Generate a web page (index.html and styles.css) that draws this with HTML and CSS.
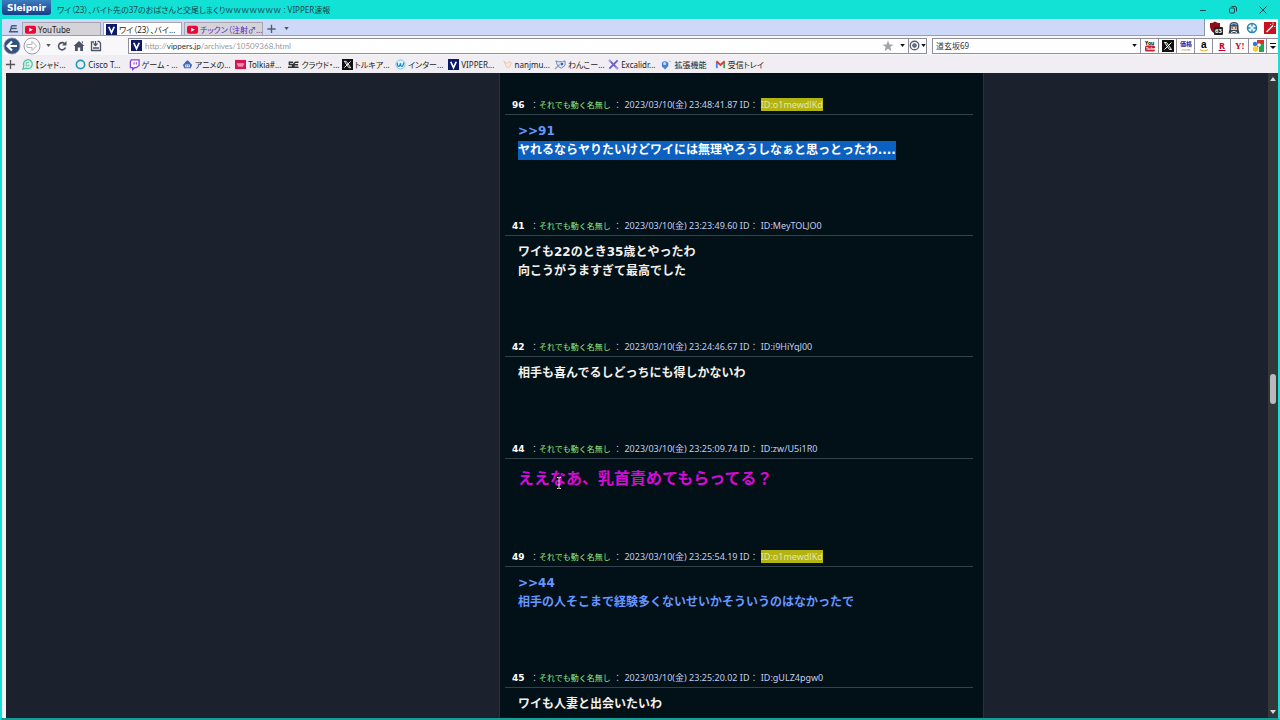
FILE: index.html
```html
<!DOCTYPE html>
<html lang="ja">
<head>
  <meta charset="UTF-8">
  <meta name="viewport" content="width=device-width, initial-scale=1.0">
  <title>VIPPER速報</title>
  <link rel="stylesheet" href="styles.css">
</head>
<body>

  <!-- Title bar -->
  <header class="titlebar">
    <button class="app-menu">Sleipnir</button>
    <span class="window-title">ワイ（23）、バイト先の37のおばさんと交尾しまくりｗｗｗｗｗｗｗ : VIPPER速報</span>
    <div class="window-controls">
      <button aria-label="最小化"><svg viewBox="0 0 10 10"><path d="M2 5.5h6"/></svg></button>
      <button aria-label="元に戻す"><svg viewBox="0 0 10 10"><rect x="1.5" y="3" width="5" height="5" rx="1"/><path d="M3.5 1.5h3.5q1.5 0 1.5 1.5v3.5"/></svg></button>
      <button aria-label="閉じる"><svg viewBox="0 0 10 10"><path d="M1.5 1.5l7 7M8.5 1.5l-7 7"/></svg></button>
    </div>
  </header>

  <!-- Tabs -->
  <div class="tabbar">
    <nav class="tabs">
      <button class="tab-tool" aria-label="タブ一覧"><svg class="icon" viewBox="0 0 12 12"><path d="M4 3h5.500M3 6h6.500M1 9.500h10M4 3L2.500 9" fill="none" stroke="#4c5870" stroke-width="1.500"/></svg></button>
      <a class="tab" href="#"><svg class="icon" viewBox="0 0 12 12"><rect y="2" width="12" height="8.500" rx="2" fill="#e8063a"/><path d="M4.500 4v4.500L8.500 6.200z" fill="#fff"/></svg>YouTube</a>
      <a class="tab active" href="#"><svg class="icon" viewBox="0 0 12 12"><rect width="12" height="12" fill="#0b1a66"/><path d="M3 3l3 6.500L9 3" fill="none" stroke="#fff" stroke-width="1.800"/></svg>ワイ（23）、バイ...</a>
      <a class="tab unread" href="#"><svg class="icon" viewBox="0 0 12 12"><rect y="2" width="12" height="8.500" rx="2" fill="#e8063a"/><path d="M4.500 4v4.500L8.500 6.200z" fill="#fff"/></svg>チックン（注射♂...</a>
      <button class="tab-tool" aria-label="新しいタブ"><svg class="icon" viewBox="0 0 12 12"><path d="M6 2v9M1.500 6.500h9" stroke="#555c6b" stroke-width="1.500"/></svg></button>
      <button class="tab-tool" aria-label="タブメニュー"><svg class="caret" viewBox="0 0 6 4"><path d="M0 0h6L3 4z"/></svg></button>
    </nav>
    <div class="extensions">
      <button aria-label="広告ブロック"><svg viewBox="0 0 14 14"><path d="M1 2q3 0 5-1.500Q8 2 11 2v4q-1 5-5 6.500Q2 11 1 6z" fill="#8d0c16"/><rect x="5" y="6" width="9" height="8" rx="1" fill="#222"/><text x="6" y="12" class="badge">63</text></svg></button>
      <button aria-label="マスク"><svg viewBox="0 0 14 14"><path d="M2.500 5q0-4 4.500-4t4.500 4v3l1 4.500h-11l1-4.500z" fill="#384454"/><path d="M4 4q3-3 6 0" stroke="#5fb2e0" stroke-width="1.500" fill="none"/><path d="M4 5.500h6V9H4z" fill="#f1c3ae"/><path d="M4.500 7h1.500M8 7h1.500" stroke="#333"/><path d="M4 11.500q3-2.500 6 0" stroke="#fff" fill="none"/></svg></button>
      <button aria-label="ターゲット"><svg viewBox="0 0 14 14"><circle cx="7" cy="7" r="4.500" fill="#eaf6fc" stroke="#2685b5" stroke-width="1.500"/><path d="M7 2v3.500M7 8.500V12M2 7h3.500M8.500 7H12" stroke="#2685b5" stroke-width="1.300"/></svg></button>
      <button aria-label="ワンド"><svg viewBox="0 0 14 14"><rect x="1" y="1" width="12" height="12" fill="#c9101c"/><path d="M3.500 11L10 4.500" stroke="#fff" stroke-width="1.500"/><path d="M10 1.500v2M11 5.500h1.500M7 3l1 1" stroke="#fbb" /></svg></button>
    </div>
  </div>

  <!-- Toolbar -->
  <div class="toolbar">
    <div class="nav-buttons">
      <button aria-label="戻る"><svg class="nav-icon big" viewBox="0 0 18 18"><circle cx="9" cy="9" r="8" fill="#34517f" stroke="#8697b5"/><path d="M14 9H5M9 4.500L4.500 9L9 13.500" fill="none" stroke="#fff" stroke-width="2.200"/></svg></button>
      <button aria-label="進む"><svg class="nav-icon big" viewBox="0 0 18 18"><circle cx="9" cy="9" r="8" fill="#fafafa" stroke="#9a9aa2"/><path d="M4 7.500h5V4.500L13.500 9L9 13.500v-3H4z" fill="#fff" stroke="#b5b5ba"/></svg></button>
      <button aria-label="履歴"><svg class="caret" viewBox="0 0 6 4"><path d="M0 0h6L3 4z"/></svg></button>
      <button aria-label="更新"><svg class="nav-icon" viewBox="0 0 12 12"><path d="M9.500 7.500A3.600 3.600 0 1 1 8.500 3.500" fill="none" stroke="#4c5464" stroke-width="1.600"/><path d="M10.500 1v4.500H6z" fill="#4c5464"/></svg></button>
      <button aria-label="ホーム"><svg class="nav-icon" viewBox="0 0 12 12"><path d="M6 1L11.500 6H10v5H7.200V7.500H4.800V11H2V6H.5z" fill="#4c5464"/><path d="M8.500 1.500h1.500v2.500z" fill="#4c5464"/></svg></button>
      <button aria-label="保存"><svg class="nav-icon" viewBox="0 0 12 12"><path d="M4 2H1.500v8.500h9V3L9 1.500H7.500" fill="none" stroke="#4c5464" stroke-width="1.300"/><path d="M5.500 1v4M3.500 3.500l2 2l2-2M3 8h6" fill="none" stroke="#4c5464" stroke-width="1.300"/></svg></button>
    </div>
    <div class="address">
      <svg class="icon" viewBox="0 0 12 12"><rect width="12" height="12" fill="#0b1a66"/><path d="M3 3l3 6.500L9 3" fill="none" stroke="#fff" stroke-width="1.800"/></svg>
      <a class="url" href="#">http://<b>vippers.jp</b>/archives/10509368.html</a>
      <button aria-label="お気に入り"><svg class="nav-icon" viewBox="0 0 12 12"><path d="M6 .5l1.500 4h4L8.300 7l1.200 4.200L6 8.700l-3.500 2.500L3.700 7L.5 4.500h4z" fill="#a4a4a8"/></svg></button>
      <button aria-label="アドレス履歴"><svg class="caret dark" viewBox="0 0 6 4"><path d="M0 0h6L3 4z"/></svg></button>
      <button class="engine" aria-label="表示エンジン"><svg class="icon" viewBox="0 0 12 12"><circle cx="6" cy="6" r="4.700" fill="none" stroke="#596170" stroke-width="1.500"/><circle cx="6" cy="6" r="2" fill="#697a95" stroke="#39465f"/></svg><svg class="caret dark" viewBox="0 0 6 4"><path d="M0 0h6L3 4z"/></svg></button>
    </div>
    <div class="search">
      <input type="text" value="道玄坂69" aria-label="検索">
      <button aria-label="検索履歴"><svg class="caret dark" viewBox="0 0 6 4"><path d="M0 0h6L3 4z"/></svg></button>
      <div class="engines">
        <button aria-label="YouTube"><svg viewBox="0 0 12 12"><text x="1" y="5" class="logo-you">You</text><rect x="1" y="5.500" width="10" height="6" rx="1.500" fill="#c8202f"/><text x="2" y="10" class="logo-tube">Tube</text></svg></button>
        <button aria-label="X"><svg viewBox="0 0 12 12"><rect width="12" height="12" fill="#111"/><path d="M2.500 2.500h2l5 7h-2zM9.500 2.500l-7 7" fill="none" stroke="#fff"/></svg></button>
        <button aria-label="価格.com"><svg viewBox="0 0 12 12"><text x="0" y="6" class="logo-kakaku">価格</text><text x="1" y="11" class="logo-com">.com</text></svg></button>
        <button aria-label="Amazon"><svg viewBox="0 0 12 12"><text x="3" y="8" class="logo-a">a</text><path d="M2 9.500q4 3 8 0" fill="none" stroke="#f2b33a" stroke-width="1.200"/></svg></button>
        <button aria-label="楽天"><svg viewBox="0 0 12 12"><text x="3" y="9" class="logo-r">R</text><path d="M2.500 10.500h7" stroke="#bf0020"/></svg></button>
        <button aria-label="Yahoo"><svg viewBox="0 0 12 12"><text x="1" y="9" class="logo-y">Y!</text></svg></button>
        <button aria-label="Google"><svg viewBox="0 0 12 12"><rect x="5" width="7" height="7" fill="#d9342b"/><rect x="7" y="4" width="5" height="8" fill="#23a455"/><circle cx="3" cy="4" r="2.200" fill="#3276d6"/><circle cx="3.500" cy="9" r="2.700" fill="#f2ce2f"/><circle cx="7" cy="5" r="1.800" fill="#fff"/></svg></button>
        <button aria-label="その他"><svg viewBox="0 0 12 12"><path d="M3 3.500h6" stroke="#111"/><path d="M3 6h6L6 9z" fill="#111"/></svg></button>
      </div>
    </div>
  </div>

  <!-- Bookmarks -->
  <nav class="bookmarks">
    <button aria-label="追加"><svg class="icon" viewBox="0 0 12 12"><path d="M6 1v10M1 6h10" stroke="#555" stroke-width="1.500"/></svg></button>
    <div class="bookmark-list">
      <a href="#"><svg class="icon" viewBox="0 0 12 12"><path d="M1 11l1-3.500A4.800 4.800 0 1 1 4.500 10z" fill="none" stroke="#41c99b" stroke-width="1.400"/><path d="M7.500 4h-3v3.500h3V6" fill="none" stroke="#41c99b"/></svg>【シャド...</a>
      <a href="#"><svg class="icon" viewBox="0 0 12 12"><circle cx="6" cy="6" r="4.500" fill="none" stroke="#1b9bc4" stroke-width="1.800"/></svg>Cisco T...</a>
      <a href="#"><svg class="icon" viewBox="0 0 12 12"><path d="M2.500 1H11v6l-3 2.500H6L4 11.500v-2H1.500V3z" fill="#fff" stroke="#8b3fe0" stroke-width="1.400"/><path d="M5.500 3.500V6M8 3.500V6" stroke="#8b3fe0" stroke-width="1.200"/></svg>ゲーム - ...</a>
      <a href="#"><svg class="icon" viewBox="0 0 12 12"><path d="M1 6.500L4 3q2-2.500 4 0l3 3.500L9.500 10h-7z" fill="#4169b8"/><path d="M3.500 6h5v3h-5z" fill="#dfeaff"/><path d="M5 7v1M7 7v1" stroke="#284b91"/></svg>アニメの...</a>
      <a href="#"><svg class="icon" viewBox="0 0 12 12"><rect y="1" width="12" height="10" fill="#d31651"/><path d="M2 5.500h8M3 7.500h6" stroke="#fff"/></svg>Tolkia#...</a>
      <a href="#"><svg class="icon" viewBox="0 0 12 12"><path d="M5.500 3.500H1.500v2.500h3.500v3H0M11.500 3.500H8L6.500 5v4h5M7 6.200h4" fill="none" stroke="#333" stroke-width="1.600"/></svg>クラウド・...</a>
      <a href="#"><svg class="icon" viewBox="0 0 12 12"><rect width="12" height="12" fill="#111"/><path d="M2.500 2.500h2l5 7h-2zM9.500 2.500l-7 7" fill="none" stroke="#fff"/></svg>トルキア...</a>
      <a href="#"><svg class="icon" viewBox="0 0 12 12"><circle cx="6" cy="6" r="5" fill="#d9f3fb" stroke="#78c2df"/><path d="M2.500 4q0 4 1.500 4t2-3.500Q6 8 7.500 8t2-4" fill="none" stroke="#2589b8" stroke-width="1.300"/></svg>インター...</a>
      <a href="#"><svg class="icon" viewBox="0 0 12 12"><rect width="12" height="12" fill="#0b1a66"/><path d="M3 3l3 6.500L9 3" fill="none" stroke="#fff" stroke-width="1.800"/></svg>VIPPER...</a>
      <a href="#"><svg class="icon" viewBox="0 0 12 12"><path d="M2 2l3 3l2-2l3 1-1 4-3 2-2-3z" fill="#f8e5d8" stroke="#e8c9b2"/></svg>nanjmu...</a>
      <a href="#"><svg class="icon" viewBox="0 0 12 12"><path d="M1 2l3 1h4l3-1v5L7 10 3 8z" fill="#dce9fa" stroke="#6684ae"/><path d="M0 11l5-5" stroke="#9aa3b5" stroke-width="1.500"/><circle cx="7.500" cy="5.500" r="1.500" fill="#3b64ad"/></svg>わんこー...</a>
      <a href="#"><svg class="icon" viewBox="0 0 12 12"><path d="M1.500 1.500l9 9M10.500 1.500l-9 9" stroke="#6b5bd0" stroke-width="2"/><path d="M8 9l3 2M1 1l2 2" stroke="#a79bea" stroke-width="2"/></svg>Excalidr...</a>
      <a href="#"><svg class="icon" viewBox="0 0 12 12"><path d="M1 4q3-3 7 0v3.500l-3.500 4L1 8z" fill="#4b7fcf"/><circle cx="4" cy="5" r="1.700" fill="#b9d6ff"/><path d="M8 2l3 1" stroke="#b5bccb"/></svg>拡張機能</a>
      <a href="#"><svg class="icon" viewBox="0 0 12 12"><path d="M2 10V3" stroke="#4285f4" stroke-width="2"/><path d="M10 10V3" stroke="#34a853" stroke-width="2"/><path d="M1.500 2.500L6 6.500l4.500-4" fill="none" stroke="#e33b2e" stroke-width="2"/></svg>受信トレイ</a>
    </div>
  </nav>

  <!-- Page -->
  <div class="viewport">
    <main class="page">
      <section class="thread">
        <article class="post">
          <h2 class="post-head"><b>96</b><span>：<em>それでも動く名無し</em> ： 2023/03/10(金) 23:48:41.87 ID： <mark>ID:o1mewdlKd</mark></span></h2>
          <p class="post-body"><a href="#">&gt;&gt;91</a><br><span class="selected">ヤれるならヤりたいけどワイには無理やろうしなぁと思っとったわ....</span></p>
        </article>
        <article class="post">
          <h2 class="post-head"><b>41</b><span>：<em>それでも動く名無し</em> ： 2023/03/10(金) 23:23:49.60 ID： ID:MeyTOLJO0</span></h2>
          <p class="post-body">ワイも22のとき35歳とやったわ<br>向こうがうますぎて最高でした</p>
        </article>
        <article class="post">
          <h2 class="post-head"><b>42</b><span>：<em>それでも動く名無し</em> ： 2023/03/10(金) 23:24:46.67 ID： ID:i9HiYqJ00</span></h2>
          <p class="post-body">相手も喜んでるしどっちにも得しかないわ</p>
        </article>
        <article class="post">
          <h2 class="post-head"><b>44</b><span>：<em>それでも動く名無し</em> ： 2023/03/10(金) 23:25:09.74 ID： ID:zw/U5i1R0</span></h2>
          <p class="post-body pink">ええなあ、乳首責めてもらってる？
            <svg class="cursor" viewBox="0 0 6 12"><path d="M1 .5h1.500l.5.5.5-.5H5M3 1v10M1 11.500h1.500l.5-.5.5.5H5" fill="none" stroke="#ddd"/></svg>
          </p>
        </article>
        <article class="post">
          <h2 class="post-head"><b>49</b><span>：<em>それでも動く名無し</em> ： 2023/03/10(金) 23:25:54.19 ID： <mark>ID:o1mewdlKd</mark></span></h2>
          <p class="post-body blue"><a href="#">&gt;&gt;44</a><br>相手の人そこまで経験多くないせいかそういうのはなかったで</p>
        </article>
        <article class="post">
          <h2 class="post-head"><b>45</b><span>：<em>それでも動く名無し</em> ： 2023/03/10(金) 23:25:20.02 ID： ID:gULZ4pgw0</span></h2>
          <p class="post-body">ワイも人妻と出会いたいわ</p>
        </article>
      </section>
    </main>
    <div class="scrollbar">
      <svg class="arrow" viewBox="0 0 6 4"><path d="M0 4h6L3 0z"/></svg>
      <div class="thumb"></div>
      <svg class="arrow" viewBox="0 0 6 4"><path d="M0 0h6L3 4z"/></svg>
    </div>
  </div>

</body>
</html>
```

FILE: styles.css
```css
/* General Styling */
* {
  box-sizing: border-box;
}

body {
  margin: 0;
  height: 100vh;
  display: flex;
  flex-direction: column;
  overflow: hidden;
  background-color: #f0eef2;
  border: 0 solid #12e2d6;
  border-width: 0 2px 2px;
  border-bottom-color: #159e98;
  font-family: "Noto Sans", "Noto Sans CJK JP", sans-serif;
  font-size: 8px;
  color: #222;
}

a {
  color: inherit;
  text-decoration: none;
}

button {
  display: flex;
  align-items: center;
  justify-content: center;
  padding: 0;
  border: none;
  background: none;
  font: inherit;
  color: inherit;
}

svg {
  display: block;
  flex: none;
  overflow: visible;
}

.icon {
  width: 11px;
  height: 11px;
}

.caret {
  width: 5px;
  height: 3px;
  fill: #555;
}

.caret.dark {
  fill: #111;
}

/* Title bar */
.titlebar {
  display: flex;
  align-items: center;
  flex: none;
  height: 19px;
  margin: 0 -2px;
  padding-left: 2px;
  background-color: #12e2d6;
}

.app-menu {
  align-self: flex-start;
  width: 49px;
  height: 15px;
  border-radius: 0 0 3px 3px;
  background: linear-gradient(#3d7cc0, #123f86);
  color: #fff;
  font-family: "DejaVu Sans", sans-serif;
  font-size: 9px;
  font-weight: bold;
}

.window-title {
  flex: 1;
  margin-left: 6px;
  font-feature-settings: "palt";
  color: #14444c;
}

.window-controls {
  display: flex;
  gap: 20px;
  padding-right: 12px;
}

.window-controls svg {
  width: 10px;
  height: 10px;
  fill: none;
  stroke: #12454a;
}

/* Tabs */
.tabbar {
  display: flex;
  flex: none;
  height: 17px;
  background-color: #fff;
}

.tabs {
  display: flex;
  flex: 1;
  align-items: flex-end;
  gap: 2px;
  padding-left: 5px;
  background-color: #cdd9f7;
  border-right: 1px solid #8d93a8;
  border-bottom: 1px solid #9a9caf;
}

.tab {
  display: flex;
  align-items: center;
  gap: 2px;
  width: 79px;
  height: 13px;
  padding-left: 2px;
  overflow: hidden;
  white-space: nowrap;
  font-feature-settings: "palt";
  background-color: #d5d2d8;
  border: 1px solid #a7a6b3;
  border-bottom: none;
}

.tab.active {
  background-color: #fff;
}

.tab.unread {
  color: #4a2fc0;
}

.tab-tool {
  width: 13px;
  height: 13px;
}

.extensions {
  display: flex;
  align-items: center;
  gap: 4px;
  padding: 0 1px 0 4px;
}

.extensions svg {
  width: 14px;
  height: 14px;
}

.badge {
  font-size: 6px;
  font-weight: bold;
  fill: #fff;
}

/* Toolbar */
.toolbar {
  display: flex;
  align-items: center;
  flex: none;
  height: 19px;
  background-color: #f8f7fa;
}

.nav-buttons {
  display: flex;
  align-items: center;
  gap: 5px;
  width: 126px;
  padding-left: 1px;
}

.nav-buttons button:nth-child(2) {
  margin-left: -3px;
}

.nav-icon {
  width: 12px;
  height: 12px;
}

.nav-icon.big {
  width: 18px;
  height: 18px;
}

.address,
.search {
  display: flex;
  align-items: center;
  height: 16px;
  background-color: #fff;
  border: 1px solid #8f8f9a;
}

.address {
  flex: 1;
  gap: 3px;
  margin-right: 5px;
  padding-left: 2px;
}

.url {
  flex: 1;
  font-family: "Lato", sans-serif;
  color: #999;
}

.url b {
  font-weight: normal;
  color: #333;
}

.address button {
  margin-left: 3px;
}

.address .engine {
  gap: 1px;
  height: 14px;
  margin-left: 0;
  border-left: 1px solid #8f8f9a;
}

.search {
  width: 346px;
  border-right: none;
}

.search input {
  flex: 1;
  min-width: 0;
  padding: 0 3px;
  border: none;
  outline: none;
  font: inherit;
  color: #333;
}

.engines {
  display: flex;
  margin-left: 3px;
}

.engines button {
  width: 18px;
  height: 14px;
  border-left: 1px solid #8f8f9a;
}

.engines button:last-child {
  width: 12px;
}

.engines svg {
  width: 12px;
  height: 12px;
}

.logo-you {
  font-size: 5px;
  font-weight: bold;
}

.logo-tube {
  font-size: 4px;
  font-weight: bold;
  fill: #fff;
}

.logo-kakaku {
  font-size: 6px;
  font-weight: bold;
  fill: #1c2fae;
}

.logo-com {
  font-size: 4px;
  fill: #b07830;
}

.logo-a {
  font-family: "Liberation Sans", sans-serif;
  font-size: 10px;
  font-weight: bold;
}

.logo-r,
.logo-y {
  font-size: 9px;
  font-weight: bold;
  fill: #bf0020;
}

.logo-y {
  font-family: "Liberation Serif", serif;
}

/* Bookmarks */
.bookmarks {
  display: flex;
  align-items: center;
  flex: none;
  height: 18px;
  padding-left: 3px;
}

.bookmark-list {
  display: grid;
  grid-template-columns: repeat(14, 1fr);
  width: 746px;
  margin-left: 6px;
}

.bookmark-list a {
  display: flex;
  align-items: center;
  gap: 2px;
  white-space: nowrap;
  font-feature-settings: "palt";
}

/* Page */
.viewport {
  display: flex;
  flex: 1;
  min-height: 0;
  padding-left: 4px;
  background-color: #f4f4f6;
}

.page {
  display: grid;
  grid-template-columns: 1fr 485px 284px;
  flex: 1;
  overflow: hidden;
  background-color: #1b212d;
}

.thread {
  grid-column: 2;
  padding: 22px 10px 0 5px;
  background-color: #021018;
  border: 0 solid #2b303b;
  border-width: 0 1px;
}

.post {
  margin-bottom: 56px;
}

.post-head {
  display: flex;
  align-items: center;
  height: 20px;
  margin: 0;
  padding-left: 7px;
  border-bottom: 1px solid #34404a;
  font-size: 9px;
  font-weight: normal;
  white-space: nowrap;
  color: #c3cfee;
}

.post-head b {
  width: 18px;
  font-family: "DejaVu Sans", sans-serif;
  color: #fff;
}

.post-head em {
  font-size: 8px;
  font-style: normal;
  color: #8fef86;
}

.post-head mark {
  background-color: #b3b314;
  color: #e4e6a8;
}

.post-body {
  position: relative;
  margin: 0;
  padding: 7px 0 0 13px;
  font-family: "DejaVu Sans", "Noto Sans CJK JP", sans-serif;
  font-size: 12px;
  font-weight: bold;
  line-height: 19px;
  color: #f4f0ec;
}

.post-body a,
.post-body.blue {
  color: #6696ff;
}

.post-body.pink {
  font-size: 16px;
  line-height: 25px;
  color: #d40ad6;
}

.selected {
  display: inline-block;
  background-color: #0c60c0;
  color: #fff;
}

.cursor {
  position: absolute;
  left: 51px;
  top: 18px;
  width: 6px;
  height: 12px;
}

/* Scrollbar */
.scrollbar {
  display: flex;
  flex-direction: column;
  align-items: center;
  justify-content: space-between;
  width: 10px;
  padding: 4px 0;
  background-color: #33383b;
}

.arrow {
  width: 6px;
  height: 4px;
  fill: #d8d8da;
}

.thumb {
  width: 6px;
  height: 30px;
  margin-bottom: 14px;
  border-radius: 3px;
  background-color: #b9b9bb;
}
```
